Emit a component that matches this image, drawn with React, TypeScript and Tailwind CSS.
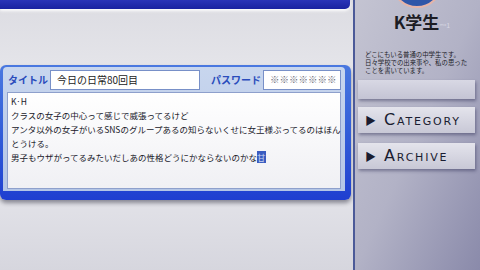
const jp = { fontFamily: '"Noto Sans CJK JP", "Noto Sans", sans-serif' };
const cap = { fontFamily: '"DejaVu Sans", "Liberation Sans", sans-serif', fontVariant: 'small-caps' as const };

function MenuCard({ label }: { label: string }) {
  return (
    <div className="h-[26px] flex items-center gap-[8px] pl-[7px] bg-gradient-to-b from-[#e4e4ec] to-[#c8c8d6] shadow-[1px_2px_3px_rgba(40,40,80,0.45)]">
      <span className="text-[11px] leading-none text-[#1a1c30]">▶</span>
      <span className="text-[16px] leading-none tracking-[1.8px] text-[#1a1c30]" style={cap}>
        {label}
      </span>
    </div>
  );
}

export default function App() {
  return (
    <div className="w-[480px] h-[270px] flex overflow-hidden" style={jp}>
      {/* 左: 投稿フォーム */}
      <div className="w-[353px] h-full flex flex-col bg-gradient-to-b from-[#dcdce2] via-[#ededf1] to-[#d6d6de]">
        <div className="w-[350px] h-[9px] rounded-br-[5px] bg-gradient-to-b from-[#2a34b8] to-[#1a22a0] shadow-[0_2px_3px_rgba(255,255,255,0.9)]" />
        <div className="mt-[56px] w-[351px] rounded-[6px] bg-gradient-to-b from-[#4a78e0] to-[#1f3fd0] pt-[2px] pl-[3px] pr-[6px] pb-[9px] shadow-[0_3px_4px_rgba(0,0,20,0.4)]">
          <div className="rounded-t-[4px] bg-gradient-to-b from-[#c8d6ee] to-[#b4c6e6] px-[4px] pb-[2px]">
            {/* タイトル行 */}
            <div className="h-[25px] flex items-center">
              <span className="w-[43px] pl-[1px] text-[10px] font-bold text-[#2a4cbc]">タイトル</span>
              <div className="w-[150px] h-[20px] flex items-center pl-[6px] bg-white border border-[#7890c8] text-[10px] text-[#222]">
                今日の日常80回目
              </div>
              <span className="ml-[11px] w-[52px] text-[10px] font-bold text-[#2a4cbc]">パスワード</span>
              <div className="flex-1 h-[20px] flex items-center pl-[6px] bg-white border border-[#7890c8] text-[9.5px] text-[#6c6c7a]">
                ※※※※※※※
              </div>
            </div>
            {/* 本文 */}
            <div className="h-[97px] bg-gradient-to-b from-white to-[#f0f0f4] border border-[#8ea0cc] px-[3px] pt-[1px] text-[8.5px] leading-[14px] text-[#20202a] whitespace-nowrap">
              <div>K·H</div>
              <div>クラスの女子の中心って感じで威張ってるけど</div>
              <div>アンタ以外の女子がいるSNSのグループあるの知らないくせに女王様ぶってるのはほん</div>
              <div>とうける。</div>
              <div>
                男子もウザがってるみたいだしあの性格どうにかならないのかな
                <span className="bg-[#3a5cc0] text-[#c8d4f0]">甘</span>
              </div>
            </div>
          </div>
        </div>
      </div>

      {/* 右: サイドバー */}
      <div className="flex-1 h-full border-l-2 border-[#4c5a98] bg-gradient-to-br from-[#c4c4d2] via-[#b2b2c6] to-[#8a8aaa] flex flex-col items-stretch pl-[3px] pr-[5px] overflow-hidden">
        <div className="self-center -mt-[44px] w-[52px] h-[52px] rounded-full bg-[#2f56a8] border-[2px] border-[#e6b4a8]" />
        <div className="relative self-center mt-[4px] text-[17px] leading-[20px] font-bold text-[#1c1c24]">
          K学生
          <span className="absolute left-[46px] top-[3px] text-[7px] font-normal text-[#d8d8e4]">ᵐˣ1</span>
        </div>
        <div className="mt-[19px] pl-[7px] text-[6.4px] leading-[8px] text-[#1c1c28] whitespace-nowrap">
          <div>どこにもいる普通の中学生です。</div>
          <div>日々学校での出来事や、私の思った</div>
          <div>ことを書いています。</div>
        </div>
        <div className="mt-[5px] h-[19px] bg-gradient-to-b from-[#d8d8e4] to-[#c4c4d4] shadow-[1px_2px_3px_rgba(40,40,80,0.45)]" />
        <div className="mt-[8px] flex flex-col gap-[10px]">
          <MenuCard label="Category" />
          <MenuCard label="Archive" />
        </div>
      </div>
    </div>
  );
}
